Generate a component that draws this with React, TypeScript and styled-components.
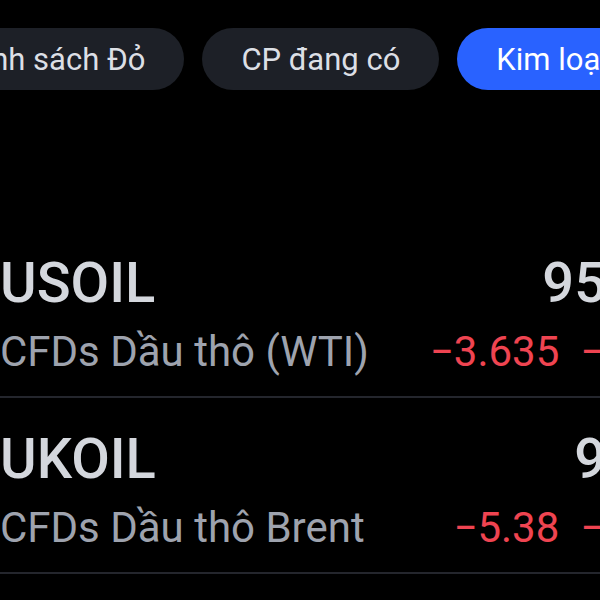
import styled, { createGlobalStyle } from 'styled-components';

const GlobalStyle = createGlobalStyle`
  html, body {
    margin: 0;
    padding: 0;
    background: #000;
  }
  body {
    font-family: Roboto, "Noto Sans", "Liberation Sans", sans-serif;
  }
`;

type Quote = {
  symbol: string;
  name: string;
  price: string;
  change: string;
  percent: string;
};

const tabs = ['Danh sách Đỏ', 'CP đang có', 'Kim loại', 'Năng lượng'];
const activeTab = 'Kim loại';

const quotes: Quote[] = [
  { symbol: 'USOIL', name: 'CFDs Dầu thô (WTI)', price: '95.230', change: '−3.635', percent: '−3.68%' },
  { symbol: 'UKOIL', name: 'CFDs Dầu thô Brent', price: '98.49', change: '−5.38', percent: '−5.18%' },
];

export default function App() {
  return (
    <>
      <GlobalStyle />
      <Screen>
        <TabBar>
          {tabs.map((t) => (
            <Pill key={t} active={t === activeTab}>
              {t}
            </Pill>
          ))}
        </TabBar>
        <List>
          {quotes.map((q) => (
            <Row key={q.symbol}>
              <Left>
                <Symbol>{q.symbol}</Symbol>
                <Name>{q.name}</Name>
              </Left>
              <Right>
                <Price>{q.price}</Price>
                <Change>
                  <span>{q.change}</span>
                  <span>{q.percent}</span>
                </Change>
              </Right>
            </Row>
          ))}
        </List>
      </Screen>
    </>
  );
}

const Screen = styled.div`
  width: 600px;
  height: 600px;
  overflow: hidden;
  background: #000;
`;

// horizontally scrolled chip bar, first chip is partly off screen
const TabBar = styled.div`
  display: flex;
  gap: 18px;
  padding-top: 28px;
  margin-left: -85px;
  white-space: nowrap;
`;

const Pill = styled.div<{ active?: boolean }>`
  flex: none;
  height: 62px;
  display: flex;
  align-items: center;
  padding: 0 39px;
  border-radius: 31px;
  font-size: 31px;
  color: ${(p) => (p.active ? '#fff' : '#dcdfe5')};
  background: ${(p) => (p.active ? '#2962ff' : '#1d2027')};
`;

const List = styled.div`
  width: 717px;
  margin-top: 132px;
`;

const Row = styled.div`
  display: flex;
  justify-content: space-between;
  padding: 29px 0 19px;
  border-bottom: 2px solid #24262d;
`;

const Left = styled.div`
  display: flex;
  flex-direction: column;
`;

const Right = styled.div`
  display: flex;
  flex-direction: column;
  align-items: flex-end;
`;

const Symbol = styled.div`
  font-size: 56px;
  line-height: 64px;
  font-weight: 500;
  color: #d4d7dd;
`;

const Price = styled(Symbol)``;

const Name = styled.div`
  margin-top: 12px;
  font-size: 42px;
  line-height: 50px;
  color: #9ea3ae;
`;

const Change = styled.div`
  margin-top: 12px;
  font-size: 42px;
  line-height: 50px;
  color: #ef4451;
  display: flex;
  gap: 21px;
`;
